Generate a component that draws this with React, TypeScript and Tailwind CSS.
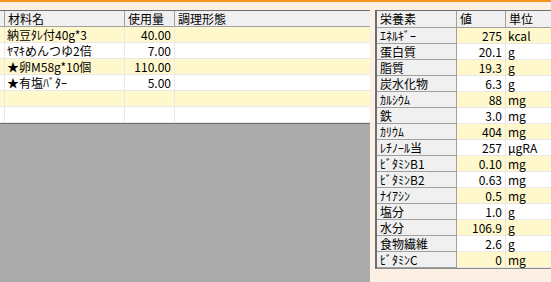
import React from 'react'

const font = { fontFamily: '"MS UI Gothic", "Noto Sans CJK JP", "Liberation Sans", sans-serif' }

const ingredients = [
  { name: '納豆ﾀﾚ付40g*3', amount: '40.00' },
  { name: 'ﾔﾏｷめんつゆ2倍', amount: '7.00' },
  { name: '★卵M58g*10個', amount: '110.00' },
  { name: '★有塩ﾊﾞﾀｰ', amount: '5.00' },
  { name: '', amount: '' },
  { name: '', amount: '' },
]

const nutrients = [
  ['ｴﾈﾙｷﾞｰ', '275', 'kcal'],
  ['蛋白質', '20.1', 'g'],
  ['脂質', '19.3', 'g'],
  ['炭水化物', '6.3', 'g'],
  ['ｶﾙｼｳﾑ', '88', 'mg'],
  ['鉄', '3.0', 'mg'],
  ['ｶﾘｳﾑ', '404', 'mg'],
  ['ﾚﾁﾉｰﾙ当', '257', 'μgRA'],
  ['ﾋﾞﾀﾐﾝB1', '0.10', 'mg'],
  ['ﾋﾞﾀﾐﾝB2', '0.63', 'mg'],
  ['ﾅｲｱｼﾝ', '0.5', 'mg'],
  ['塩分', '1.0', 'g'],
  ['水分', '106.9', 'g'],
  ['食物繊維', '2.6', 'g'],
  ['ﾋﾞﾀﾐﾝC', '0', 'mg'],
]

export default function App() {
  return (
    <div className="w-[551px] h-[282px] overflow-hidden bg-[#fcf0e4] flex flex-col text-[12px] text-black leading-[15px]" style={font}>
      <div className="h-[2px] bg-[#f7941d] shrink-0" />
      <div className="flex flex-1 pt-[8px] min-h-0">
        {/* Ingredients grid */}
        <div className="w-[370px] flex flex-col shrink-0">
          <div className="flex h-[17px] bg-[#f0f0f0] border-t border-b border-t-[#6e6e6e] border-b-[#a0a0a0]">
            <div className="w-[5px] border-r border-[#a0a0a0]" />
            <div className="w-[120px] border-r border-[#a0a0a0] pl-[3px]">材料名</div>
            <div className="w-[50px] border-r border-[#a0a0a0] pl-[3px]">使用量</div>
            <div className="flex-1 pl-[3px]">調理形態</div>
          </div>
          {ingredients.map((row, i) => (
            <div key={i} className={`flex h-[16px] border-b border-[#e8e8e8] ${i % 2 === 0 ? 'bg-[#fff8cd]' : 'bg-white'}`}>
              <div className="w-[5px] border-r border-[#e8e8e8]" />
              <div className="w-[120px] border-r border-[#e8e8e8] pl-[2px] whitespace-nowrap">{row.name}</div>
              <div className="w-[50px] border-r border-[#e8e8e8] pr-[3px] text-right">{row.amount}</div>
              <div className="flex-1" />
            </div>
          ))}
          <div className="flex-1 bg-[#ababab] border-t border-[#6e6e6e]" />
        </div>

        {/* Nutrient grid */}
        <div className="ml-[5px] flex-1 min-w-0 overflow-hidden">
          <div className="w-[230px] border-l-2 border-b border-t border-l-[#6e6e6e] border-b-[#8a8a8a] border-t-[#6e6e6e]">
            <div className="flex h-[17px] bg-[#f0f0f0] border-b border-[#a0a0a0]">
              <div className="w-[80px] border-r border-[#a0a0a0] pl-[3px]">栄養素</div>
              <div className="w-[49px] border-r border-[#a0a0a0] pl-[3px]">値</div>
              <div className="flex-1 pl-[3px]">単位</div>
            </div>
            {nutrients.map(([name, value, unit], i) => (
              <div key={name} className="flex h-[16px]">
                <div className="w-[80px] bg-[#f0f0f0] border-r border-b border-[#a0a0a0] pl-[3px] whitespace-nowrap">{name}</div>
                <div className={`flex flex-1 border-b border-[#e8e8e8] ${i % 2 === 0 ? 'bg-[#fff8cd]' : 'bg-white'}`}>
                  <div className="w-[49px] border-r border-[#e8e8e8] pr-[3px] text-right">{value}</div>
                  <div className="flex-1 pl-[2px]">{unit}</div>
                </div>
              </div>
            ))}
          </div>
        </div>
      </div>
    </div>
  )
}
